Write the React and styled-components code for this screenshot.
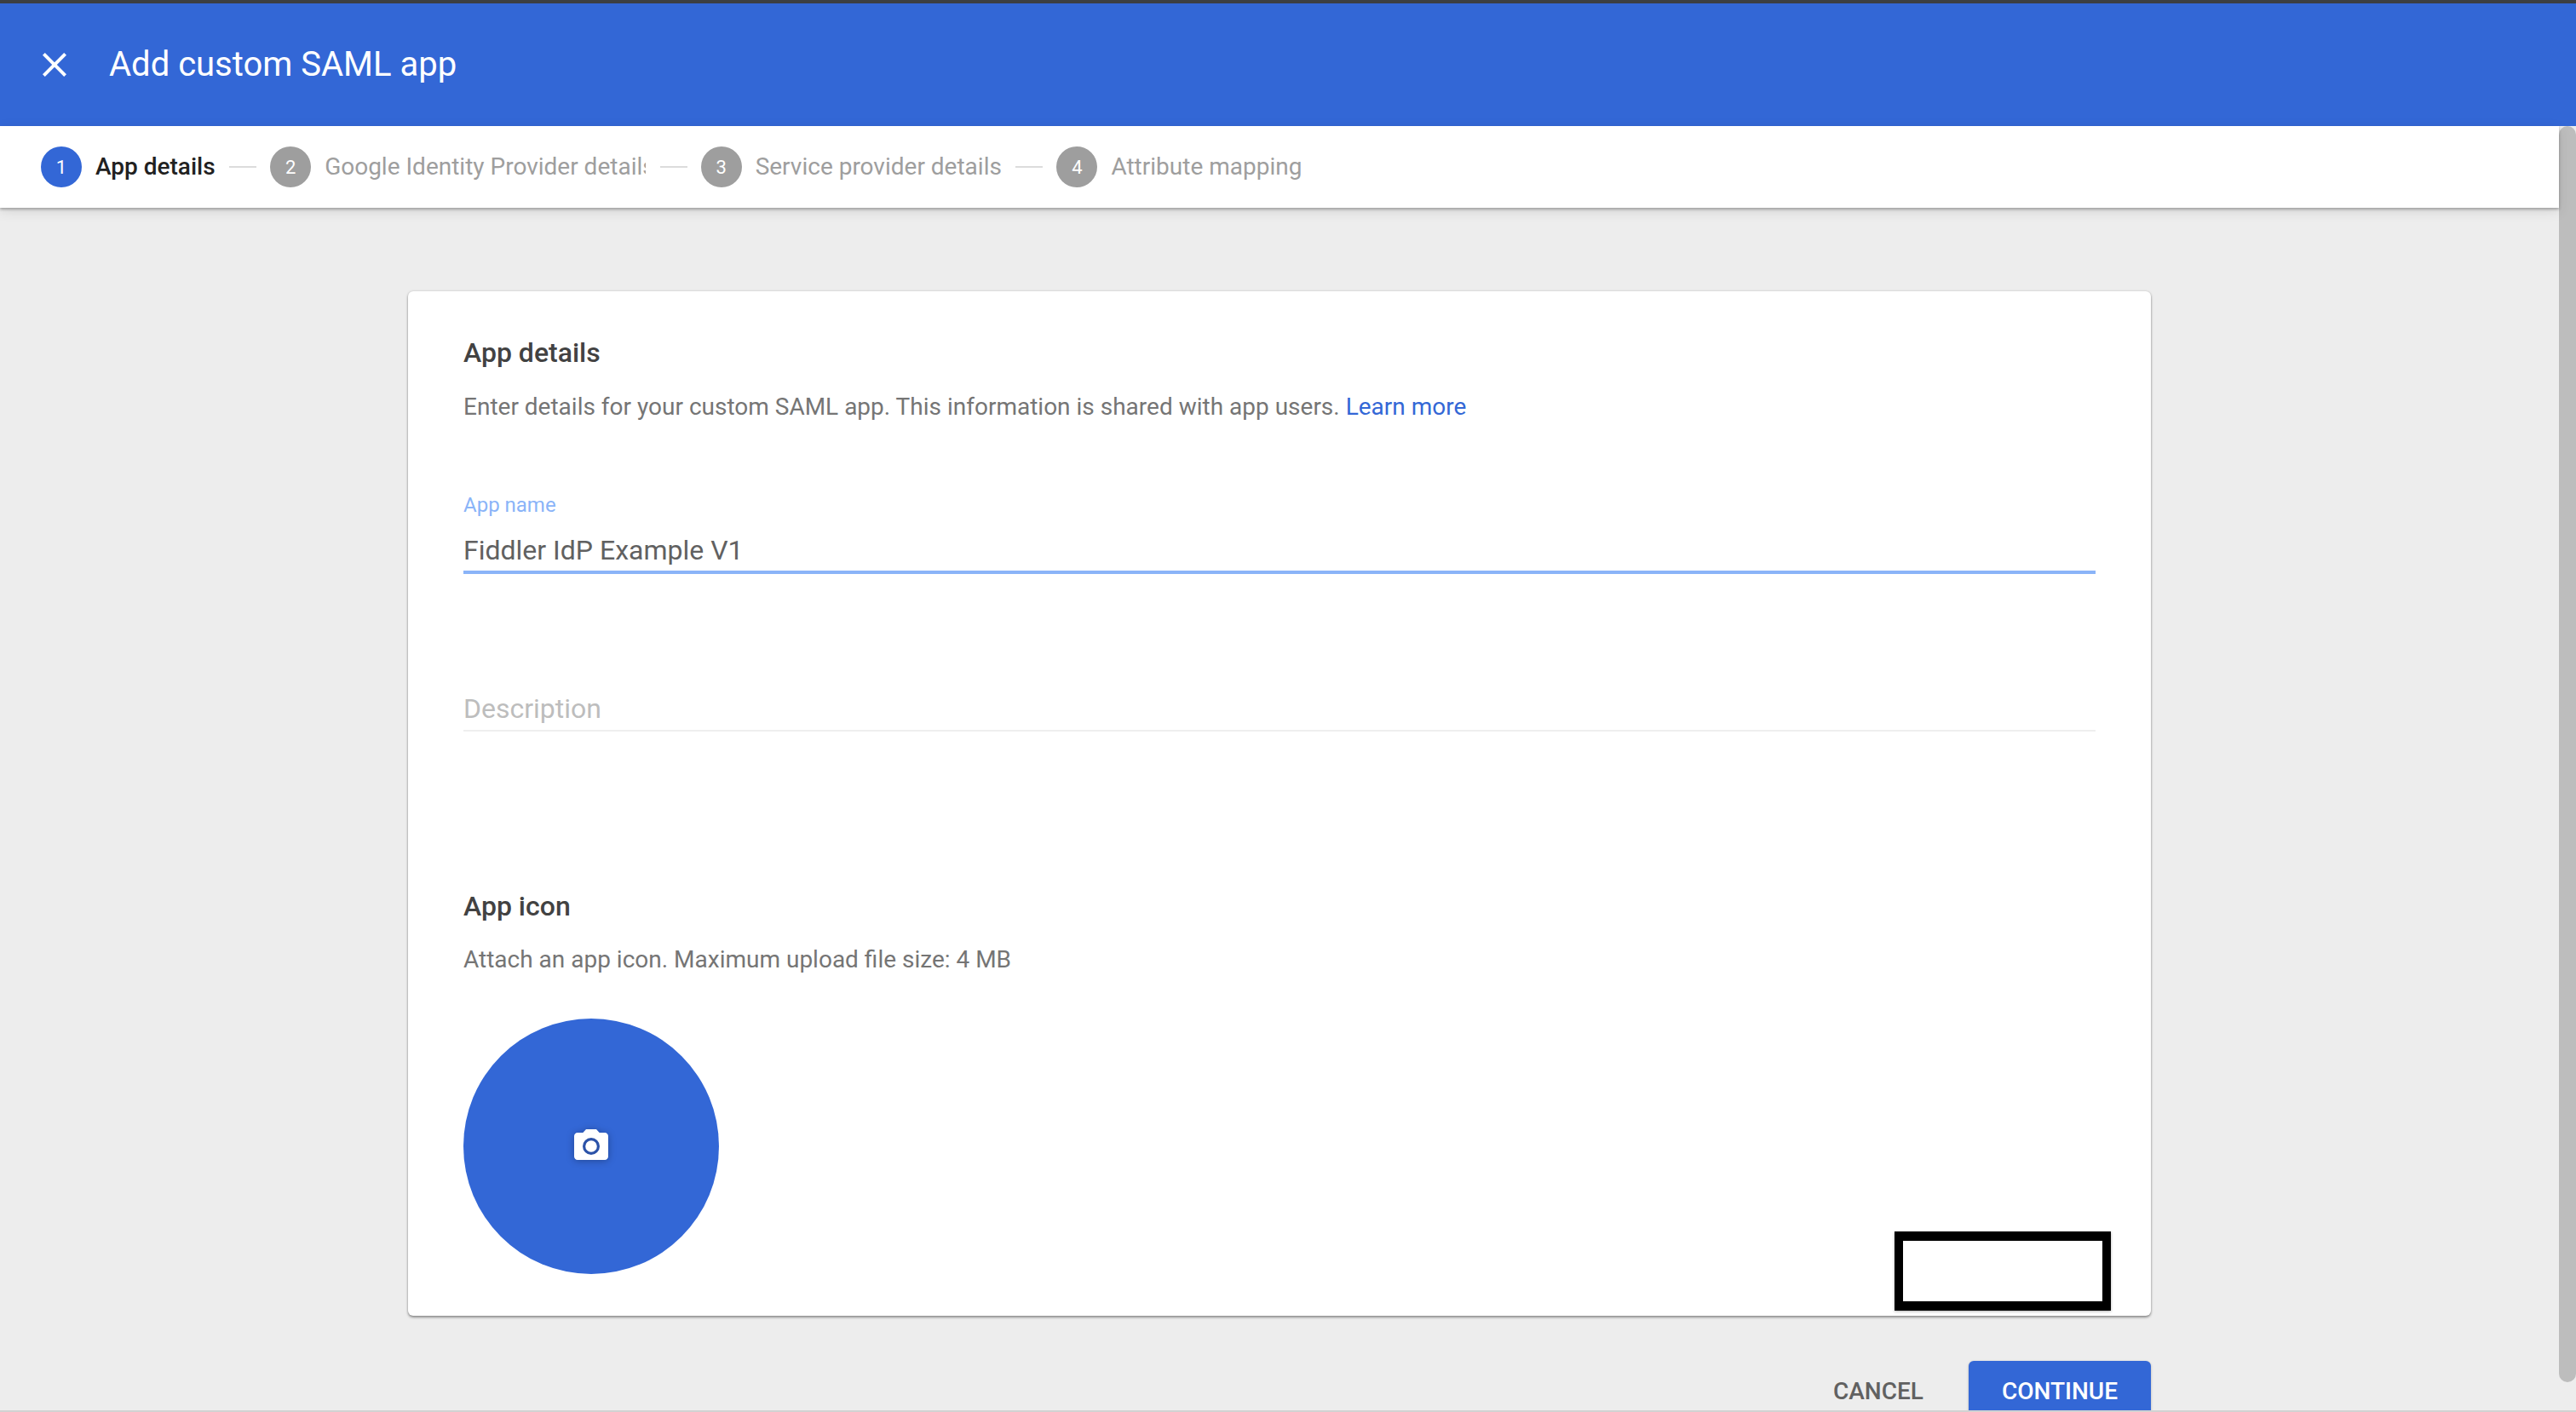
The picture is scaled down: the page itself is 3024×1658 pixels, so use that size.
import { Fragment } from 'react';
import styled, { createGlobalStyle } from 'styled-components';

const blue = '#3367d6';
const lightBlue = '#8ab4f8';

const GlobalStyle = createGlobalStyle`
    * {
        box-sizing: border-box;
    }
    html, body {
        margin: 0;
        padding: 0;
        overflow: hidden;
        font-family: Roboto, "Liberation Sans", sans-serif;
        background: #ededed;
    }
`;

const Page = styled.div`
    display: flex;
    flex-direction: column;
    width: 3024px;
    height: 1658px;
    overflow: hidden;
    border-top: 4px solid #3c3f43;
    border-bottom: 2px solid #d2d2d2;
`;

const Header = styled.header`
    display: flex;
    flex: none;
    align-items: center;
    gap: 40px;
    height: 144px;
    padding-left: 40px;
    background: ${blue};
    color: #fff;
`;

const CloseIcon = styled.svg`
    flex: none;
    width: 48px;
    height: 48px;
    fill: #fff;
`;

const Title = styled.h1`
    margin: 0;
    font-size: 40px;
    font-weight: 400;
    line-height: 48px;
`;

const Body = styled.div`
    display: flex;
    flex: 1;
    min-height: 0;
`;

const Main = styled.div`
    display: flex;
    flex: 1;
    flex-direction: column;
    min-width: 0;
`;

const Stepper = styled.nav`
    position: relative;
    z-index: 1;
    display: flex;
    flex: none;
    align-items: center;
    height: 96px;
    padding-left: 48px;
    background: #fff;
    box-shadow: 0 2px 3px rgba(0, 0, 0, 0.28), 0 4px 14px rgba(0, 0, 0, 0.1);
`;

const StepCircle = styled.span`
    display: flex;
    flex: none;
    align-items: center;
    justify-content: center;
    width: 48px;
    height: 48px;
    border-radius: 50%;
    background: ${(p) => (p.$active ? blue : '#9e9e9e')};
    color: #fff;
    font-size: 22px;
`;

const StepLabel = styled.span`
    flex: none;
    max-width: ${(p) => p.$maxWidth || 'none'};
    margin-left: 16px;
    overflow: hidden;
    color: ${(p) => (p.$active ? '#212121' : '#9e9e9e')};
    font-size: 28px;
    font-weight: ${(p) => (p.$active ? 500 : 400)};
    line-height: 40px;
    white-space: nowrap;
`;

const Connector = styled.span`
    flex: none;
    width: 32px;
    height: 2px;
    margin: 0 16px 0 16.5px;
    background: #dcdcdc;
`;

const Content = styled.main`
    flex: 1;
    min-height: 0;
    padding-top: 98px;
    overflow: hidden;
`;

const Column = styled.div`
    width: 2046px;
    margin: 0 auto;
`;

const Card = styled.section`
    position: relative;
    padding: 52px 65px 49px;
    border-radius: 6px;
    background: #fff;
    box-shadow: 0 2px 3px rgba(0, 0, 0, 0.38), 0 0 3px rgba(0, 0, 0, 0.16);
`;

const SectionTitle = styled.h2`
    margin: ${(p) => p.$top || 0} 0 0;
    color: #424242;
    font-size: 32px;
    font-weight: 500;
    line-height: 40px;
`;

const Help = styled.p`
    margin: ${(p) => p.$top || '24px'} 0 0;
    color: #757575;
    font-size: 28px;
    line-height: 40px;
`;

const HelpLink = styled.a`
    color: ${blue};
    text-decoration: none;
`;

const FieldLabel = styled.div`
    margin-top: 79px;
    color: ${lightBlue};
    font-size: 24px;
    line-height: 32px;
`;

const FieldValue = styled.div`
    margin-top: ${(p) => p.$top};
    padding-bottom: ${(p) => p.$gap || 0};
    border-bottom: ${(p) => (p.$focused ? `4px solid ${lightBlue}` : '2px solid #eeeeee')};
    color: ${(p) => (p.$placeholder ? '#bdbdbd' : '#616161')};
    font-size: 32px;
    line-height: 48px;
`;

const Avatar = styled.div`
    display: flex;
    align-items: center;
    justify-content: center;
    width: 300px;
    height: 300px;
    margin-top: 49px;
    border-radius: 50%;
    background: ${blue};
`;

const CameraIcon = styled.svg`
    width: 48px;
    height: 48px;
    filter: drop-shadow(0 1px 4px rgba(0, 0, 0, 0.3));
`;

const Redaction = styled.div`
    position: absolute;
    right: 47px;
    bottom: 6px;
    width: 254px;
    height: 93px;
    border: solid #000;
    border-width: 11px 10px;
    background: #fff;
    box-shadow: 0 1px 3px rgba(0, 0, 0, 0.3);
`;

const Actions = styled.div`
    display: flex;
    justify-content: flex-end;
    gap: 14px;
    margin-top: 53px;
`;

const Button = styled.button`
    flex: none;
    height: 72px;
    padding: 0 39px;
    border: 0;
    border-radius: 6px;
    background: ${(p) => (p.$primary ? blue : 'transparent')};
    box-shadow: ${(p) => (p.$primary ? '0 1px 3px rgba(0, 0, 0, 0.25)' : 'none')};
    color: ${(p) => (p.$primary ? '#fff' : '#616161')};
    font-family: inherit;
    font-size: 28px;
    font-weight: 500;
    line-height: 40px;
`;

const ScrollTrack = styled.div`
    flex: none;
    width: 20px;
`;

const ScrollThumb = styled.div`
    height: 1475px;
    border-radius: 10px;
    background: #bdbdbd;
`;

const steps = [
    { label: 'App details', active: true },
    { label: 'Google Identity Provider details', maxWidth: '377px' },
    { label: 'Service provider details' },
    { label: 'Attribute mapping' },
];

const App = () => (
    <>
        <GlobalStyle />
        <Page>
            <Header>
                <CloseIcon viewBox="0 0 24 24">
                    <path d="M19 6.41L17.59 5 12 10.59 6.41 5 5 6.41 10.59 12 5 17.59 6.41 19 12 13.41 17.59 19 19 17.59 13.41 12z" />
                </CloseIcon>
                <Title>Add custom SAML app</Title>
            </Header>
            <Body>
                <Main>
                    <Stepper>
                        {steps.map((step, i) => (
                            <Fragment key={step.label}>
                                {i > 0 && <Connector />}
                                <StepCircle $active={step.active}>{i + 1}</StepCircle>
                                <StepLabel $active={step.active} $maxWidth={step.maxWidth}>
                                    {step.label}
                                </StepLabel>
                            </Fragment>
                        ))}
                    </Stepper>
                    <Content>
                        <Column>
                            <Card>
                                <SectionTitle>App details</SectionTitle>
                                <Help>
                                    Enter details for your custom SAML app. This information is shared with app users.{' '}
                                    <HelpLink href="#">Learn more</HelpLink>
                                </Help>
                                <FieldLabel>App name</FieldLabel>
                                <FieldValue $top="13px" $focused>
                                    Fiddler IdP Example V1
                                </FieldValue>
                                <FieldValue $top="134px" $gap="1px" $placeholder>
                                    Description
                                </FieldValue>
                                <SectionTitle $top="185px">App icon</SectionTitle>
                                <Help $top="23px">Attach an app icon. Maximum upload file size: 4 MB</Help>
                                <Avatar>
                                    <CameraIcon viewBox="0 0 24 24">
                                        <path
                                            fill="#fff"
                                            d="M9 2L7.17 4H4c-1.1 0-2 .9-2 2v12c0 1.1.9 2 2 2h16c1.1 0 2-.9 2-2V6c0-1.1-.9-2-2-2h-3.17L15 2H9z"
                                        />
                                        <circle cx="12" cy="12" r="4.2" fill="#fff" stroke="#2b52a8" strokeWidth="1.6" />
                                    </CameraIcon>
                                </Avatar>
                                <Redaction />
                            </Card>
                            <Actions>
                                <Button>CANCEL</Button>
                                <Button $primary>CONTINUE</Button>
                            </Actions>
                        </Column>
                    </Content>
                </Main>
                <ScrollTrack>
                    <ScrollThumb />
                </ScrollTrack>
            </Body>
        </Page>
    </>
);

export default App;
